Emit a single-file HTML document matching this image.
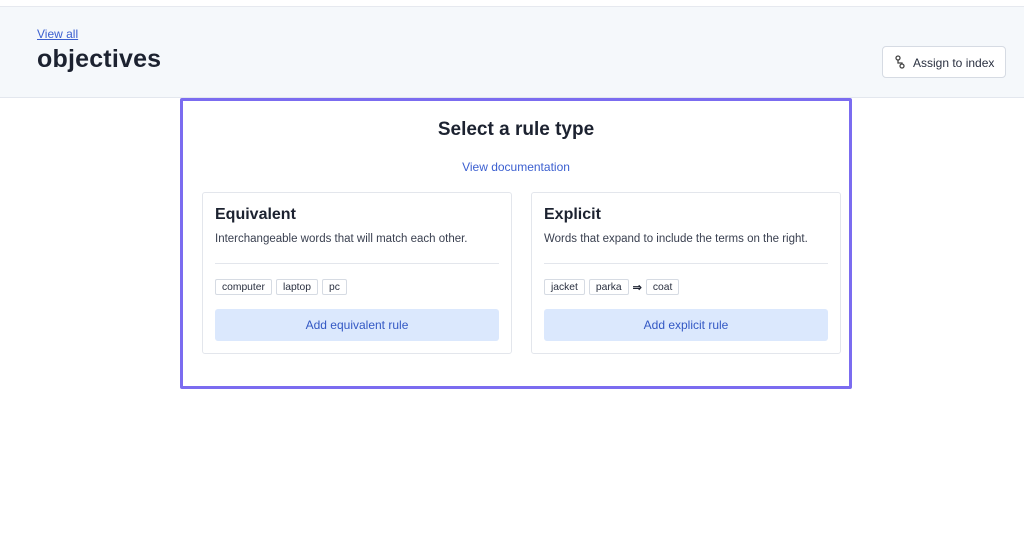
<!DOCTYPE html>
<html><head><style>
*{box-sizing:border-box;margin:0;padding:0}
body{width:1024px;height:546px;background:#fff;font-family:"Liberation Sans",sans-serif;color:#1f2433;position:relative;overflow:hidden}
.hdr{position:absolute;left:0;top:6px;width:1024px;height:92px;background:#f5f8fb;border-top:1px solid #e6e9ef;border-bottom:1px solid #e3e7ee}
.va{position:absolute;left:37px;top:27px;font-size:12px;color:#3b5fd0;text-decoration:underline}
.h1{position:absolute;left:37px;top:45px;font-size:25px;font-weight:bold;color:#1c2230;letter-spacing:0.2px}
.btn{position:absolute;left:882px;top:46px;width:124px;height:32px;background:#fff;border:1px solid #d6dbe3;border-radius:4px;font-size:12px;color:#2a3040;padding:9px 0 0 30px}
.btn svg{position:absolute;left:11px;top:8px}
.box{position:absolute;left:180px;top:98px;width:672px;height:291px;border:3px solid #7b6cf0;border-radius:2px;background:#fff}
.title{position:absolute;left:0;width:100%;top:18px;text-align:center;font-size:19px;font-weight:bold;color:#1c2230}
.doc{position:absolute;left:0;width:100%;top:59px;text-align:center;font-size:12px;color:#3b5fd0}
.card{position:absolute;top:91px;width:310px;height:162px;border:1px solid #e3e6ec;border-radius:3px}
.card h2{position:absolute;left:12px;top:13px;font-size:16px;font-weight:bold;color:#1c2230}
.card p{position:absolute;left:12px;top:40px;font-size:11.5px;color:#3a4050}
.card hr{position:absolute;left:12px;top:70px;width:284px;border:0;border-top:1px solid #e3e6ec}
.tags{position:absolute;left:12px;top:86px;display:flex;gap:4px;align-items:center;font-size:10.3px}
.tag{border:1px solid #d6dbe3;border-radius:2px;padding:2px 6px;height:16px;line-height:11px;color:#2a3040}
.add{position:absolute;left:12px;top:116px;width:284px;height:32px;background:#dbe8fd;border-radius:3px;text-align:center;line-height:32px;font-size:12px;color:#3358c4}
</style></head><body>
<div class="hdr"></div>
<div class="va">View all</div>
<div class="h1">objectives</div>
<div class="btn"><svg width="12" height="14" viewBox="0 0 12 14" fill="none" stroke="#444" stroke-width="1.3"><circle cx="4" cy="3" r="2"/><circle cx="8" cy="11" r="2"/><path d="M4 5v3h4v1"/></svg>Assign to index</div>
<div class="box">
<div class="title">Select a rule type</div>
<div class="doc">View documentation</div>
<div class="card" style="left:19px">
<h2>Equivalent</h2><p>Interchangeable words that will match each other.</p><hr>
<div class="tags"><span class="tag">computer</span><span class="tag">laptop</span><span class="tag">pc</span></div>
<div class="add">Add equivalent rule</div></div>
<div class="card" style="left:348px">
<h2>Explicit</h2><p>Words that expand to include the terms on the right.</p><hr>
<div class="tags"><span class="tag">jacket</span><span class="tag">parka</span><span style="font-size:11px;font-weight:bold">⇒</span><span class="tag">coat</span></div>
<div class="add">Add explicit rule</div></div>
</div>
</body></html>
